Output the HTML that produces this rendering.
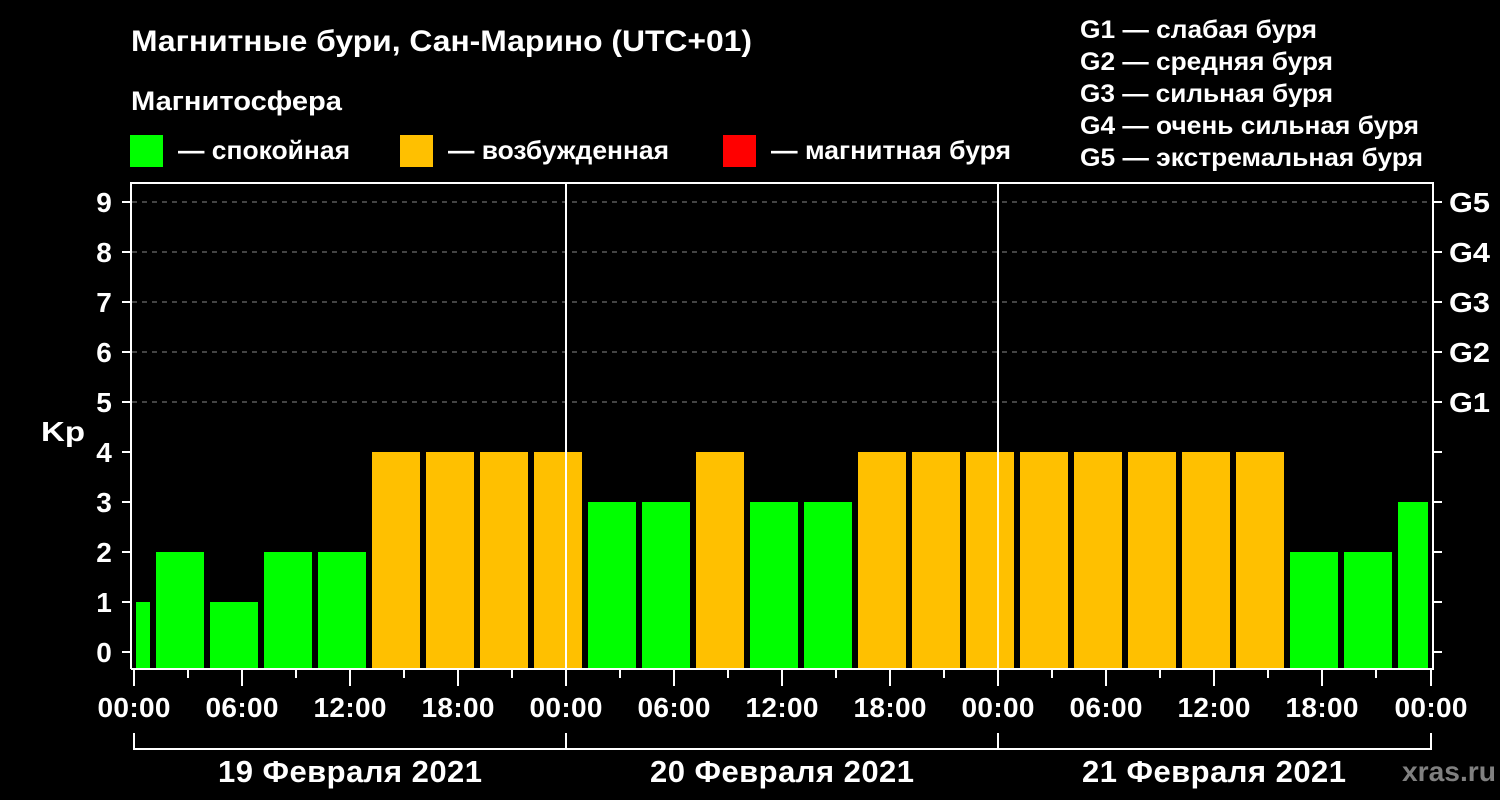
<!DOCTYPE html>
<html><head><meta charset="utf-8"><style>
html,body{margin:0;padding:0;background:#000;}
svg{display:block;}
text{font-family:"Liberation Sans",sans-serif;font-weight:bold;fill:#fff;}
</style></head><body>
<svg width="1500" height="800" viewBox="0 0 1500 800" xmlns="http://www.w3.org/2000/svg">
<rect width="1500" height="800" fill="#000"/>
<text x="131" y="51" font-size="30" textLength="621" lengthAdjust="spacingAndGlyphs">Магнитные бури, Сан-Марино (UTC+01)</text>
<text x="131" y="110" font-size="27" textLength="211" lengthAdjust="spacingAndGlyphs">Магнитосфера</text>
<rect x="130" y="135" width="33" height="32" fill="#00ff00"/>
<text x="178" y="159" font-size="26" textLength="172" lengthAdjust="spacingAndGlyphs">— спокойная</text>
<rect x="400" y="135" width="33" height="32" fill="#ffc000"/>
<text x="448" y="159" font-size="26" textLength="221" lengthAdjust="spacingAndGlyphs">— возбужденная</text>
<rect x="723" y="135" width="33" height="32" fill="#ff0000"/>
<text x="771" y="159" font-size="26" textLength="240" lengthAdjust="spacingAndGlyphs">— магнитная буря</text>
<g font-size="25">
<text x="1080" y="38" textLength="237" lengthAdjust="spacingAndGlyphs">G1 — слабая буря</text>
<text x="1080" y="70" textLength="253" lengthAdjust="spacingAndGlyphs">G2 — средняя буря</text>
<text x="1080" y="102" textLength="253" lengthAdjust="spacingAndGlyphs">G3 — сильная буря</text>
<text x="1080" y="134" textLength="339" lengthAdjust="spacingAndGlyphs">G4 — очень сильная буря</text>
<text x="1080" y="166" textLength="343" lengthAdjust="spacingAndGlyphs">G5 — экстремальная буря</text>
</g>
<g stroke="#888" stroke-width="1" stroke-dasharray="5,5">
<line x1="132" y1="202" x2="1432" y2="202"/>
<line x1="132" y1="252" x2="1432" y2="252"/>
<line x1="132" y1="302" x2="1432" y2="302"/>
<line x1="132" y1="352" x2="1432" y2="352"/>
<line x1="132" y1="402" x2="1432" y2="402"/>
</g>
<g fill="#00ff00">
<rect x="136" y="602" width="14" height="66"/>
<rect x="156" y="552" width="48" height="116"/>
<rect x="210" y="602" width="48" height="66"/>
<rect x="264" y="552" width="48" height="116"/>
<rect x="318" y="552" width="48" height="116"/>
<rect x="588" y="502" width="48" height="166"/>
<rect x="642" y="502" width="48" height="166"/>
<rect x="750" y="502" width="48" height="166"/>
<rect x="804" y="502" width="48" height="166"/>
<rect x="1290" y="552" width="48" height="116"/>
<rect x="1344" y="552" width="48" height="116"/>
<rect x="1398" y="502" width="30" height="166"/>
</g>
<g fill="#ffc000">
<rect x="372" y="452" width="48" height="216"/>
<rect x="426" y="452" width="48" height="216"/>
<rect x="480" y="452" width="48" height="216"/>
<rect x="534" y="452" width="48" height="216"/>
<rect x="696" y="452" width="48" height="216"/>
<rect x="858" y="452" width="48" height="216"/>
<rect x="912" y="452" width="48" height="216"/>
<rect x="966" y="452" width="48" height="216"/>
<rect x="1020" y="452" width="48" height="216"/>
<rect x="1074" y="452" width="48" height="216"/>
<rect x="1128" y="452" width="48" height="216"/>
<rect x="1182" y="452" width="48" height="216"/>
<rect x="1236" y="452" width="48" height="216"/>
</g>
<g stroke="#fff" stroke-width="2" fill="none">
<path d="M131 669 V183 H1433 V669 H131"/>
<line x1="566" y1="183" x2="566" y2="668"/>
<line x1="998" y1="183" x2="998" y2="668"/>
</g>
<g stroke="#fff" stroke-width="2">
<line x1="122" y1="202" x2="131" y2="202"/><line x1="1433" y1="202" x2="1442" y2="202"/>
<line x1="122" y1="252" x2="131" y2="252"/><line x1="1433" y1="252" x2="1442" y2="252"/>
<line x1="122" y1="302" x2="131" y2="302"/><line x1="1433" y1="302" x2="1442" y2="302"/>
<line x1="122" y1="352" x2="131" y2="352"/><line x1="1433" y1="352" x2="1442" y2="352"/>
<line x1="122" y1="402" x2="131" y2="402"/><line x1="1433" y1="402" x2="1442" y2="402"/>
<line x1="122" y1="452" x2="131" y2="452"/><line x1="1433" y1="452" x2="1442" y2="452"/>
<line x1="122" y1="502" x2="131" y2="502"/><line x1="1433" y1="502" x2="1442" y2="502"/>
<line x1="122" y1="552" x2="131" y2="552"/><line x1="1433" y1="552" x2="1442" y2="552"/>
<line x1="122" y1="602" x2="131" y2="602"/><line x1="1433" y1="602" x2="1442" y2="602"/>
<line x1="122" y1="652" x2="131" y2="652"/><line x1="1433" y1="652" x2="1442" y2="652"/>
</g>
<g stroke="#fff" stroke-width="2">
<line x1="134" y1="670" x2="134" y2="686"/><line x1="188" y1="670" x2="188" y2="678"/>
<line x1="242" y1="670" x2="242" y2="686"/><line x1="296" y1="670" x2="296" y2="678"/>
<line x1="350" y1="670" x2="350" y2="686"/><line x1="404" y1="670" x2="404" y2="678"/>
<line x1="458" y1="670" x2="458" y2="686"/><line x1="512" y1="670" x2="512" y2="678"/>
<line x1="566" y1="670" x2="566" y2="686"/><line x1="620" y1="670" x2="620" y2="678"/>
<line x1="674" y1="670" x2="674" y2="686"/><line x1="728" y1="670" x2="728" y2="678"/>
<line x1="782" y1="670" x2="782" y2="686"/><line x1="836" y1="670" x2="836" y2="678"/>
<line x1="890" y1="670" x2="890" y2="686"/><line x1="944" y1="670" x2="944" y2="678"/>
<line x1="998" y1="670" x2="998" y2="686"/><line x1="1052" y1="670" x2="1052" y2="678"/>
<line x1="1106" y1="670" x2="1106" y2="686"/><line x1="1160" y1="670" x2="1160" y2="678"/>
<line x1="1214" y1="670" x2="1214" y2="686"/><line x1="1268" y1="670" x2="1268" y2="678"/>
<line x1="1322" y1="670" x2="1322" y2="686"/><line x1="1376" y1="670" x2="1376" y2="678"/>
<line x1="1431" y1="670" x2="1431" y2="686"/>
</g>
<g stroke="#fff" stroke-width="2" fill="none">
<path d="M134 733 V749 H1431 V733"/>
<line x1="566" y1="733" x2="566" y2="749"/>
<line x1="998" y1="733" x2="998" y2="749"/>
</g>
<g font-size="28" text-anchor="middle">
<text x="104" y="212">9</text><text x="104" y="262">8</text><text x="104" y="312">7</text>
<text x="104" y="362">6</text><text x="104" y="412">5</text><text x="104" y="462">4</text>
<text x="104" y="512">3</text><text x="104" y="562">2</text><text x="104" y="612">1</text>
<text x="104" y="662">0</text>
</g>
<text x="41" y="441" font-size="28" textLength="44" lengthAdjust="spacingAndGlyphs">Kp</text>
<g font-size="28">
<text x="1449" y="212" textLength="41" lengthAdjust="spacingAndGlyphs">G5</text><text x="1449" y="262" textLength="41" lengthAdjust="spacingAndGlyphs">G4</text><text x="1449" y="312" textLength="41" lengthAdjust="spacingAndGlyphs">G3</text>
<text x="1449" y="362" textLength="41" lengthAdjust="spacingAndGlyphs">G2</text><text x="1449" y="412" textLength="41" lengthAdjust="spacingAndGlyphs">G1</text>
</g>
<g font-size="28" text-anchor="middle" lengthAdjust="spacingAndGlyphs">
<text x="134" y="717" textLength="73">00:00</text><text x="242" y="717" textLength="73">06:00</text><text x="350" y="717" textLength="73">12:00</text>
<text x="458" y="717" textLength="73">18:00</text><text x="566" y="717" textLength="73">00:00</text><text x="674" y="717" textLength="73">06:00</text>
<text x="782" y="717" textLength="73">12:00</text><text x="890" y="717" textLength="73">18:00</text><text x="998" y="717" textLength="73">00:00</text>
<text x="1106" y="717" textLength="73">06:00</text><text x="1214" y="717" textLength="73">12:00</text><text x="1322" y="717" textLength="73">18:00</text>
<text x="1431" y="717" textLength="73">00:00</text>
</g>
<g font-size="31" text-anchor="middle" lengthAdjust="spacingAndGlyphs">
<text x="350" y="782" textLength="264">19 Февраля 2021</text>
<text x="782" y="782" textLength="264">20 Февраля 2021</text>
<text x="1214" y="782" textLength="264">21 Февраля 2021</text>
</g>
<text x="1402" y="781" font-size="28" textLength="94" lengthAdjust="spacingAndGlyphs" style="fill:#808080">xras.ru</text>
</svg>
</body></html>
